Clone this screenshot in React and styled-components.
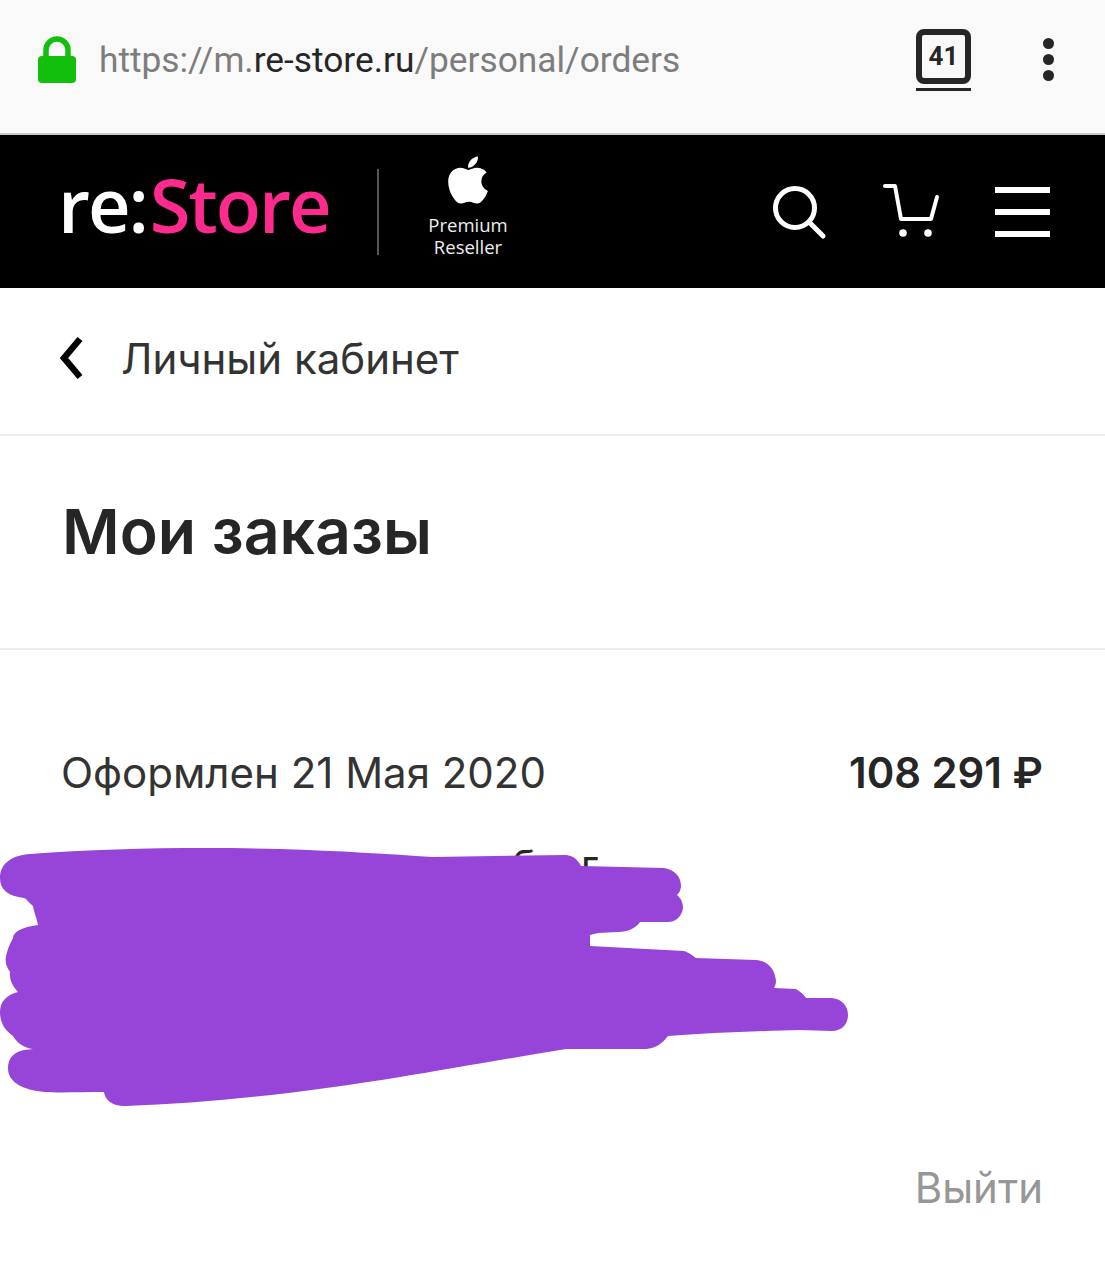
import React from "react"
import styled, { createGlobalStyle } from "styled-components"
import { FaApple } from "react-icons/fa"

const GlobalStyle = createGlobalStyle`
  html, body {
    margin: 0;
    padding: 0;
    background: #fff;
  }
  body {
    font-family: Inter, "Liberation Sans", sans-serif;
    color: #262626;
  }
`

const App = () => {
  return (
    <Page>
      <GlobalStyle />
      <BrowserBar>
        <svg width="40" height="50" viewBox="0 0 40 50" aria-hidden="true">
          <path
            d="M9 24V15a11 11 0 0 1 22 0v9"
            fill="none"
            stroke="#12bf0c"
            strokeWidth="5.5"
          />
          <rect x="1" y="21" width="38" height="27" rx="4" fill="#12bf0c" />
        </svg>
        <Url>
          https://m.<b>re-store.ru</b>/personal/orders
        </Url>
        <TabCounter>
          <TabBox>41</TabBox>
          <TabLine />
        </TabCounter>
        <Dots>
          <i />
          <i />
          <i />
        </Dots>
      </BrowserBar>

      <Header>
        <Logo>
          re:<span>Store</span>
        </Logo>
        <LogoDivider />
        <Reseller>
          <FaApple size={54} />
          <ResellerText>
            Premium
            <br />
            Reseller
          </ResellerText>
        </Reseller>
        <HeaderIcons>
          <svg width="56" height="56" viewBox="0 0 56 56" aria-hidden="true">
            <circle cx="24" cy="24" r="19.5" fill="none" stroke="#fff" strokeWidth="5" />
            <path d="M38 38l14 14" stroke="#fff" strokeWidth="5" strokeLinecap="round" />
          </svg>
          <svg width="58" height="56" viewBox="0 0 58 56" aria-hidden="true">
            <path
              d="M3 2h10l6 33h30l6-22"
              fill="none"
              stroke="#fff"
              strokeWidth="4"
              strokeLinecap="round"
              strokeLinejoin="round"
            />
            <circle cx="21" cy="49" r="3.8" fill="#fff" />
            <circle cx="46" cy="49" r="3.8" fill="#fff" />
          </svg>
          <Burger>
            <i />
            <i />
            <i />
          </Burger>
        </HeaderIcons>
      </Header>

      <BackRow>
        <svg width="24" height="44" viewBox="0 0 24 44" aria-hidden="true">
          <path d="M20 3L4 22l16 19" fill="none" stroke="#000" strokeWidth="6.5" />
        </svg>
        <BackLabel>Личный кабинет</BackLabel>
      </BackRow>

      <TitleRow>
        <Title>Мои заказы</Title>
      </TitleRow>

      <Orders>
        <OrderHead>
          <OrderDate>Оформлен 21 Мая 2020</OrderDate>
          <OrderSum>108 291 ₽</OrderSum>
        </OrderHead>
        <OrderItem>б г</OrderItem>
        <Scribble width="850" height="262" viewBox="0 846 850 262" aria-hidden="true">
          <path
            fill="#9645d8"
            d="M0 878C0 862 14 855 30 854C110 848 200 847 280 849C340 851 390 854 432 857L566 855C574 856 578 860 581 866L664 868C676 870 681 878 681 886C681 890 679 893 677 895C682 899 683 904 683 908C682 916 676 922 668 922L640 922C636 928 628 932 618 932L598 933L590 935L590 946L684 951C690 953 693 956 696 958L756 960C769 961 775 970 776 981C776 984 775 986 774 988L796 989C801 992 804 995 806 998L832 998C842 999 848 1006 848 1015C848 1024 842 1031 832 1031L800 1030C760 1031 705 1033 668 1036C662 1044 656 1048 646 1049L566 1049C510 1058 450 1069 400 1077C320 1090 220 1103 125 1106C112 1106 105 1100 104 1092C80 1092 60 1093 45 1092C22 1090 8 1082 8 1068C8 1058 14 1052 24 1050L33 1049C24 1048 17 1043 13 1036C6 1031 0 1024 0 1012C0 1002 6 995 18 992C12 986 9 978 10 972C6 966 5 962 6 956C8 948 10 944 13 938C13 932 22 927 38 925C36 916 34 912 33 906C28 902 26 898 24 898C8 896 0 890 0 878Z"
          />
        </Scribble>
      </Orders>

      <Logout>Выйти</Logout>
    </Page>
  )
}

export default App

const Page = styled.div`
  width: 1105px;
  height: 1280px;
  overflow: hidden;
  display: flex;
  flex-direction: column;
`

const BrowserBar = styled.div`
  height: 119px;
  display: flex;
  align-items: center;
  padding: 0 51px 14px 37px;
  background: #f9f9f9;
  border-bottom: 2px solid #c9c9c9;
`

const Url = styled.div`
  margin-left: 22px;
  flex: 1;
  font-family: Roboto, "Liberation Sans", sans-serif;
  font-size: 35.3px;
  color: #7d7d7d;
  b {
    font-weight: 400;
    color: #262626;
  }
`

const TabCounter = styled.div`
  display: flex;
  flex-direction: column;
  gap: 4px;
  margin-right: 72px;
`

const TabBox = styled.div`
  width: 55px;
  height: 55px;
  box-sizing: border-box;
  display: flex;
  align-items: center;
  justify-content: center;
  border: 6px solid #262626;
  border-radius: 8px;
  font-family: Roboto, "Liberation Sans", sans-serif;
  font-weight: 700;
  font-size: 26px;
  color: #262626;
`

const TabLine = styled.div`
  height: 3px;
  background: #262626;
`

const Dots = styled.div`
  display: flex;
  flex-direction: column;
  gap: 5px;
  i {
    width: 11px;
    height: 11px;
    border-radius: 50%;
    background: #262626;
  }
`

const Header = styled.header`
  height: 153px;
  display: flex;
  align-items: center;
  padding: 0 55px 0 60px;
  background: #000;
  color: #fff;
`

const Logo = styled.div`
  width: 270px;
  margin-bottom: 14px;
  margin-left: -2px;
  margin-right: 2px;
  font-family: "Open Sans", "Liberation Sans", sans-serif;
  font-weight: 600;
  font-size: 74px;
  letter-spacing: -2px;
  line-height: 1;
  white-space: nowrap;
  color: #fff;
  span {
    margin-left: 3px;
    color: #ff2a8d;
  }
`

const LogoDivider = styled.div`
  width: 2px;
  height: 86px;
  margin-left: 47px;
  background: #555;
`

const Reseller = styled.div`
  width: 80px;
  margin-left: 49px;
  margin-bottom: 13px;
  display: flex;
  flex-direction: column;
  align-items: center;
  svg {
    margin-bottom: 7px;
  }
`

const ResellerText = styled.div`
  font-family: "Open Sans", "Liberation Sans", sans-serif;
  font-size: 18.5px;
  line-height: 22px;
  text-align: center;
  color: #eee;
`

const HeaderIcons = styled.div`
  margin-left: auto;
  display: flex;
  align-items: center;
  gap: 55px;
`

const Burger = styled.div`
  width: 55px;
  display: flex;
  flex-direction: column;
  gap: 16px;
  i {
    height: 6px;
    background: #fff;
  }
`

const BackRow = styled.div`
  height: 140px;
  display: flex;
  align-items: center;
  gap: 37px;
  padding: 0 62px 6px 60px;
  border-bottom: 2px solid #ececec;
`

const BackLabel = styled.div`
  font-size: 42px;
  font-weight: 400;
  color: #333;
`

const TitleRow = styled.div`
  height: 190px;
  display: flex;
  align-items: center;
  padding: 0 62px 22px;
  border-bottom: 2px solid #ececec;
`

const Title = styled.h1`
  margin: 0;
  font-size: 62.5px;
  font-weight: 600;
  color: #262626;
`

const Orders = styled.section`
  position: relative;
  padding: 0 62px 0 61px;
`

const OrderHead = styled.div`
  margin-top: 97px;
  display: flex;
  justify-content: space-between;
  align-items: center;
`

const OrderDate = styled.div`
  font-size: 42px;
  color: #333;
`

const OrderSum = styled.div`
  font-size: 41.8px;
  font-weight: 600;
  color: #262626;
`

const OrderItem = styled.div`
  margin-top: 44px;
  padding-left: 451px;
  height: 260px;
  font-size: 40px;
  line-height: 46px;
  word-spacing: 34px;
`

const Scribble = styled.svg`
  position: absolute;
  left: 0;
  top: 196px;
`

const Logout = styled.div`
  margin-top: 60px;
  padding-right: 62px;
  text-align: right;
  font-size: 42px;
  color: #979797;
`
